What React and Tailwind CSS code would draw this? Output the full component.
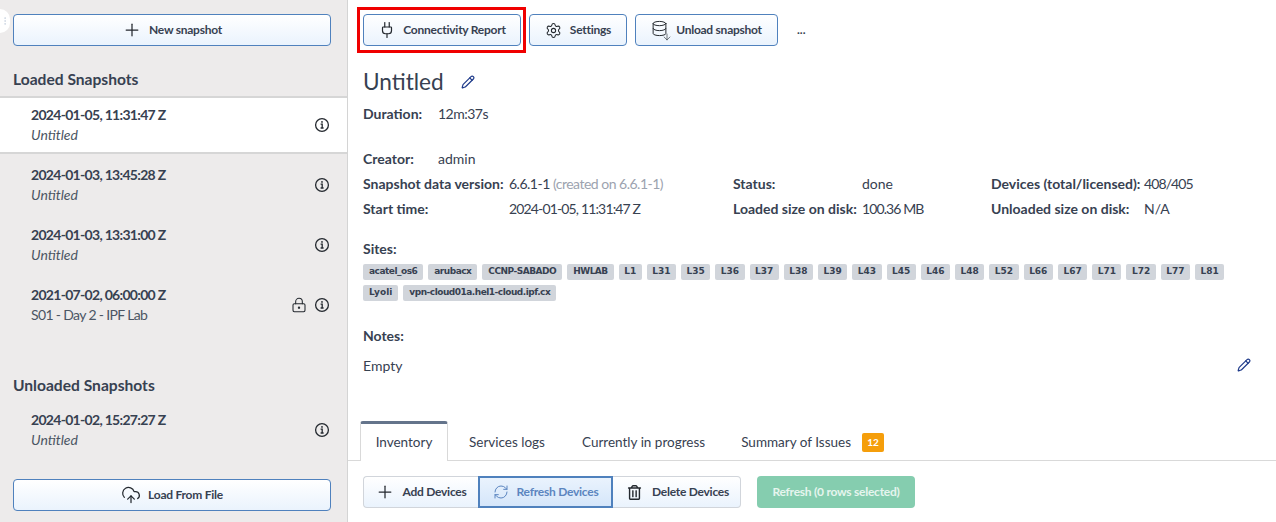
import { Plus, Plug, Settings, Database, ArrowDown, LockKeyhole, Pencil, RefreshCw, CloudUpload, MoreVertical } from 'lucide-react';
import { FaRegTrashAlt } from 'react-icons/fa';

const sites = ['acatel_os6', 'arubacx', 'CCNP-SABADO', 'HWLAB', 'L1', 'L31', 'L35', 'L36', 'L37', 'L38', 'L39', 'L43', 'L45', 'L46', 'L48', 'L52', 'L66', 'L67', 'L71', 'L72', 'L77', 'L81', 'Lyoli', 'vpn-cloud01a.hel1-cloud.ipf.cx'];

const InfoIcon = () => (
  <svg width="16" height="16" viewBox="0 0 16 16" fill="none" stroke="#24292f" className="shrink-0">
    <circle cx="8" cy="8" r="6.4" strokeWidth="1.3" />
    <path d="M6.6 7.2H8.2V11M6.6 11H9.6" strokeWidth="1.3" />
    <circle cx="8" cy="4.9" r="0.9" fill="#24292f" stroke="none" />
  </svg>
);

const SnapshotRow = ({ date, name, italic = true, active = false, locked = false }) => (
  <div className={`flex items-center pl-[31px] pr-[17px] ${active ? 'h-[54px] bg-white' : 'h-[60px]'}`}>
    <div className="flex-1">
      <div className="text-[14px] font-bold leading-[20px] tracking-[-0.7px] text-[#374151]">{date}</div>
      <div className={`text-[14px] leading-[20px] text-[#4b5563] ${italic ? 'italic' : 'tracking-[-0.65px]'}`}>{name}</div>
    </div>
    {locked && <LockKeyhole size={16} strokeWidth={1.6} className="mr-[7px] text-[#24292f]" />}
    <InfoIcon />
  </div>
);

const Button = ({ icon, children, className = '' }) => (
  <button className={`flex h-[32px] items-center justify-center rounded-[4px] border border-[#4f81bd] bg-gradient-to-b from-white to-[#eaf3fd] text-[12px] font-bold tracking-[-0.25px] text-[#374151] ${className}`}>
    {icon}
    {children}
  </button>
);

const Label = ({ children, className = '' }) => (
  <div className={`font-bold text-[#374151] ${className}`}>{children}</div>
);

export default function App() {
  return (
    <div className="flex h-[522px] w-[1276px] overflow-hidden bg-white font-['Lato','Noto_Sans',sans-serif] text-[14px] text-[#374151]">
      {/* Sidebar */}
      <aside className="relative flex w-[348px] shrink-0 flex-col border-r border-[#d4d4d4] bg-[#edebeb]">
        <div className="absolute left-[-10px] top-[9px] flex h-[24px] w-[20px] items-center justify-center rounded-full bg-white">
          <MoreVertical size={10} className="ml-[10px] text-[#cbd5e1]" />
        </div>
        <div className="px-[13px] pt-[14px]">
          <Button className="w-[318px]" icon={<Plus size={20} strokeWidth={1.5} className="mr-[7px] text-[#24292f]" />}>New snapshot</Button>
        </div>
        <h2 className="mt-[22px] h-[28px] px-[13px] text-[15.6px] font-bold leading-[22px] text-[#374151]">Loaded Snapshots</h2>
        <div className="border-y-2 border-[#d6d6d6]">
          <SnapshotRow active date="2024-01-05, 11:31:47 Z" name="Untitled" />
        </div>
        <div className="mt-[1px]">
          <SnapshotRow date="2024-01-03, 13:45:28 Z" name="Untitled" />
          <SnapshotRow date="2024-01-03, 13:31:00 Z" name="Untitled" />
          <SnapshotRow locked italic={false} date="2021-07-02, 06:00:00 Z" name="S01 - Day 2 - IPF Lab" />
        </div>
        <h2 className="mt-[39px] h-[22px] px-[13px] text-[15.6px] font-bold leading-[22px] text-[#374151]">Unloaded Snapshots</h2>
        <div className="mt-[4px]">
          <SnapshotRow date="2024-01-02, 15:27:27 Z" name="Untitled" />
        </div>
        <div className="px-[13px] pt-[19px]">
          <Button className="w-[318px]" icon={<CloudUpload size={20} strokeWidth={1.5} className="mr-[7px] text-[#24292f]" />}>Load From File</Button>
        </div>
      </aside>

      {/* Main */}
      <main className="flex min-w-0 flex-1 flex-col">
        <div className="px-[15px] pt-[14px]">
          <div className="flex items-center gap-[8px]">
            <div className="relative">
              <Button className="w-[158px]" icon={<Plug size={18} strokeWidth={1.6} className="mr-[7px] text-[#24292f]" />}>Connectivity Report</Button>
              <span className="pointer-events-none absolute inset-y-[-7px] left-[-6px] right-[-5px] border-[3px] border-[#f00000]" />
            </div>
            <Button className="w-[98px]" icon={<Settings size={17} strokeWidth={1.5} className="mr-[8px] text-[#24292f]" />}>Settings</Button>
            <Button
              className="w-[143px]"
              icon={
                <span className="relative mr-[5px] h-[20px] w-[20px]">
                  <Database size={17} strokeWidth={1.4} className="text-[#24292f]" />
                  <ArrowDown size={10} strokeWidth={1.5} className="absolute bottom-[-2px] right-[-1px] text-[#24292f]" />
                </span>
              }
            >
              Unload snapshot
            </Button>
            <span className="ml-[11px] text-[12px] font-bold">...</span>
          </div>

          <div className="mt-[19px] flex h-[34px] items-center">
            <h1 className="text-[22.6px] leading-[34px] text-[#374151]">Untitled</h1>
            <Pencil size={14} strokeWidth={2} className="ml-[17px] text-[#1e3a8a]" />
          </div>

          <div className="mt-[2px] flex h-[25px] items-center">
            <Label className="w-[75px]">Duration:</Label>
            <div className="tracking-[-0.5px]">12m:37s</div>
          </div>
          <div className="mt-[20px] flex h-[25px] items-center">
            <Label className="w-[75px]">Creator:</Label>
            <div>admin</div>
          </div>
          <div className="grid grid-cols-[146px_224px_129px_129px_153px_1fr] [grid-auto-rows:25px] items-center">
            <Label>Snapshot data version:</Label>
            <div className="tracking-[-0.5px]">6.6.1-1 <span className="text-[#9ca3af]">(created on 6.6.1-1)</span></div>
            <Label>Status:</Label>
            <div>done</div>
            <Label>Devices (total/licensed):</Label>
            <div className="tracking-[-0.9px]">408/405</div>
            <Label>Start time:</Label>
            <div className="tracking-[-0.85px]">2024-01-05, 11:31:47 Z</div>
            <Label>Loaded size on disk:</Label>
            <div className="tracking-[-0.9px]">100.36 MB</div>
            <Label>Unloaded size on disk:</Label>
            <div>N/A</div>
          </div>

          <Label className="mt-[18px] h-[20px] leading-[20px]">Sites:</Label>
          <div className="mt-[5px] flex flex-wrap gap-x-[5px] gap-y-[5px]">
            {sites.map((site) => (
              <span key={site} className={`flex h-[16px] items-center rounded-[2px] bg-[#d1d5db] font-['DejaVu_Sans',sans-serif] text-[9px] font-bold text-[#374151] ${site.length > 3 ? 'px-[6px]' : 'px-[5.5px]'} ${site.length > 4 && site !== 'Lyoli' ? 'tracking-[-0.5px]' : ''}`}>
                {site}
              </span>
            ))}
          </div>

          <Label className="mt-[25px] h-[20px] leading-[20px]">Notes:</Label>
          <div className="mt-[9px] flex h-[20px] items-center justify-between pr-[10px]">
            <span>Empty</span>
            <Pencil size={14} strokeWidth={2} className="text-[#1e3a8a]" />
          </div>
        </div>

        {/* Tabs */}
        <div className="mt-[46px] flex h-[40px] items-stretch border-b border-[#d9d9d9] pl-[12px] text-[13.5px]">
          <div className="z-10 mb-[-1px] flex w-[88px] items-center justify-center rounded-t-[3px] border-x border-t-[3px] border-x-[#d9d9d9] border-t-[#64748b] bg-white">Inventory</div>
          <div className="flex items-center pl-[21px] pt-[3px]">Services logs</div>
          <div className="flex items-center pl-[37px] pt-[3px]">Currently in progress</div>
          <div className="flex items-center pl-[36px] pt-[3px]">
            Summary of Issues
            <span className="ml-[11px] flex h-[19px] w-[22px] items-center justify-center rounded-[2px] bg-[#f59e0b] text-[10px] font-bold text-white">12</span>
          </div>
        </div>

        {/* Toolbar */}
        <div className="flex px-[15px] pt-[15px] text-[12px] font-bold tracking-[-0.25px]">
          <div className="flex h-[32px]">
            <button className="flex w-[115px] items-center justify-center rounded-l-[4px] border border-r-0 border-[#d1d5db] bg-gradient-to-b from-white to-[#eaf3fd] font-bold text-[#374151]">
              <Plus size={20} strokeWidth={1.5} className="mr-[7px] text-[#24292f]" />
              Add Devices
            </button>
            <button className="flex w-[135px] items-center justify-center border-2 border-[#4f81bd] bg-gradient-to-b from-[#eaf3fd] to-[#d5e6fa] font-bold text-[#5b85c0]">
              <RefreshCw size={16} strokeWidth={1.5} className="mr-[8px]" />
              Refresh Devices
            </button>
            <button className="flex w-[128px] items-center justify-center rounded-r-[4px] border border-l-0 border-[#d1d5db] bg-gradient-to-b from-white to-[#eaf3fd] pl-[3px] font-bold text-[#374151]">
              <FaRegTrashAlt size={15} className="mr-[10px] text-[#24292f]" />
              Delete Devices
            </button>
          </div>
          <button className="ml-[16px] flex h-[32px] w-[158px] items-center justify-center rounded-[4px] bg-[#85cdaf] font-bold text-[#e6f5ee]">Refresh (0 rows selected)</button>
        </div>
      </main>
    </div>
  );
}
